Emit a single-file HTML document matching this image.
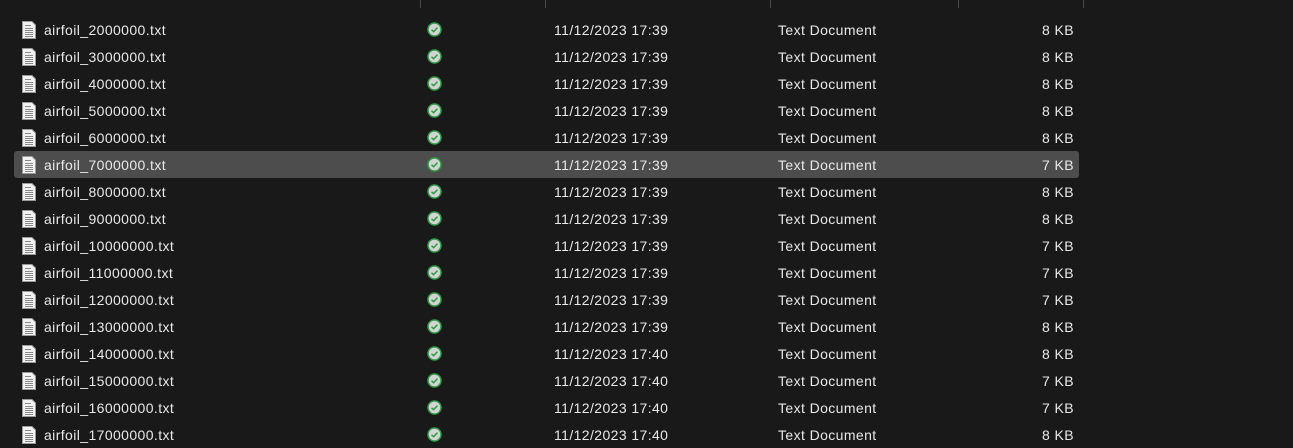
<!DOCTYPE html>
<html><head><style>
body{margin:0;width:1293px;height:443px;background:#191919;overflow:hidden;font-family:"Liberation Sans",sans-serif;font-size:14px;letter-spacing:0.4px;color:#e8e8e8;position:relative}
.sep{position:absolute;top:0;width:1px;height:8px;background:#4a4a4a}
.row{position:absolute;left:14px;width:1065px;height:27px;border-radius:3px}
.row.sel{background:#4d4d4d}
.row span{position:absolute;top:6px;white-space:nowrap}
.n{left:30px}.d{left:540px}.t{left:764px}.s{right:5px}
.fi{position:absolute;left:8px;top:5px}
.ck{position:absolute;left:413px;top:6px}
</style></head><body>
<div class="sep" style="left:420px"></div><div class="sep" style="left:545px"></div><div class="sep" style="left:770px"></div><div class="sep" style="left:958px"></div><div class="sep" style="left:1083px"></div>
<div id="c"></div>
<script>
var rows=[["2000000","39",8],["3000000","39",8],["4000000","39",8],["5000000","39",8],["6000000","39",8],["7000000","39",7],["8000000","39",8],["9000000","39",8],["10000000","39",7],["11000000","39",7],["12000000","39",7],["13000000","39",8],["14000000","40",8],["15000000","40",7],["16000000","40",7],["17000000","40",8]];
var h="";
rows.forEach(function(r,i){
h+='<div class="row'+(i==5?' sel':'')+'" style="top:'+(16+i*27)+'px">'+
'<svg class="fi" width="14" height="18" viewBox="0 0 14 18"><path d="M0.5 0.5H10L13.5 4V17.5H0.5Z" fill="#f2f2f2" stroke="#9a9a9a"/><g stroke="#8a8a8a" stroke-width="1"><line x1="3" y1="4.5" x2="9" y2="4.5"/><line x1="3" y1="7.5" x2="11" y2="7.5"/><line x1="3" y1="9.5" x2="11" y2="9.5"/><line x1="3" y1="11.5" x2="11" y2="11.5"/><line x1="3" y1="13.5" x2="11" y2="13.5"/><line x1="3" y1="15.5" x2="11" y2="15.5"/></g></svg>'+
'<span class="n">airfoil_'+r[0]+'.txt</span>'+
'<svg class="ck" width="15" height="15" viewBox="0 0 15 15"><circle cx="7.5" cy="7.5" r="6.5" fill="#d4d4d4" stroke="#2e9e46" stroke-width="1.5"/><path d="M4.5 7.8L6.6 9.7L10.5 5.6" fill="none" stroke="#2e9e46" stroke-width="1.5"/></svg>'+
'<span class="d">11/12/2023 17:'+r[1]+'</span><span class="t">Text Document</span><span class="s">'+r[2]+' KB</span></div>';
});
document.getElementById("c").innerHTML=h;
</script>
</body></html>
